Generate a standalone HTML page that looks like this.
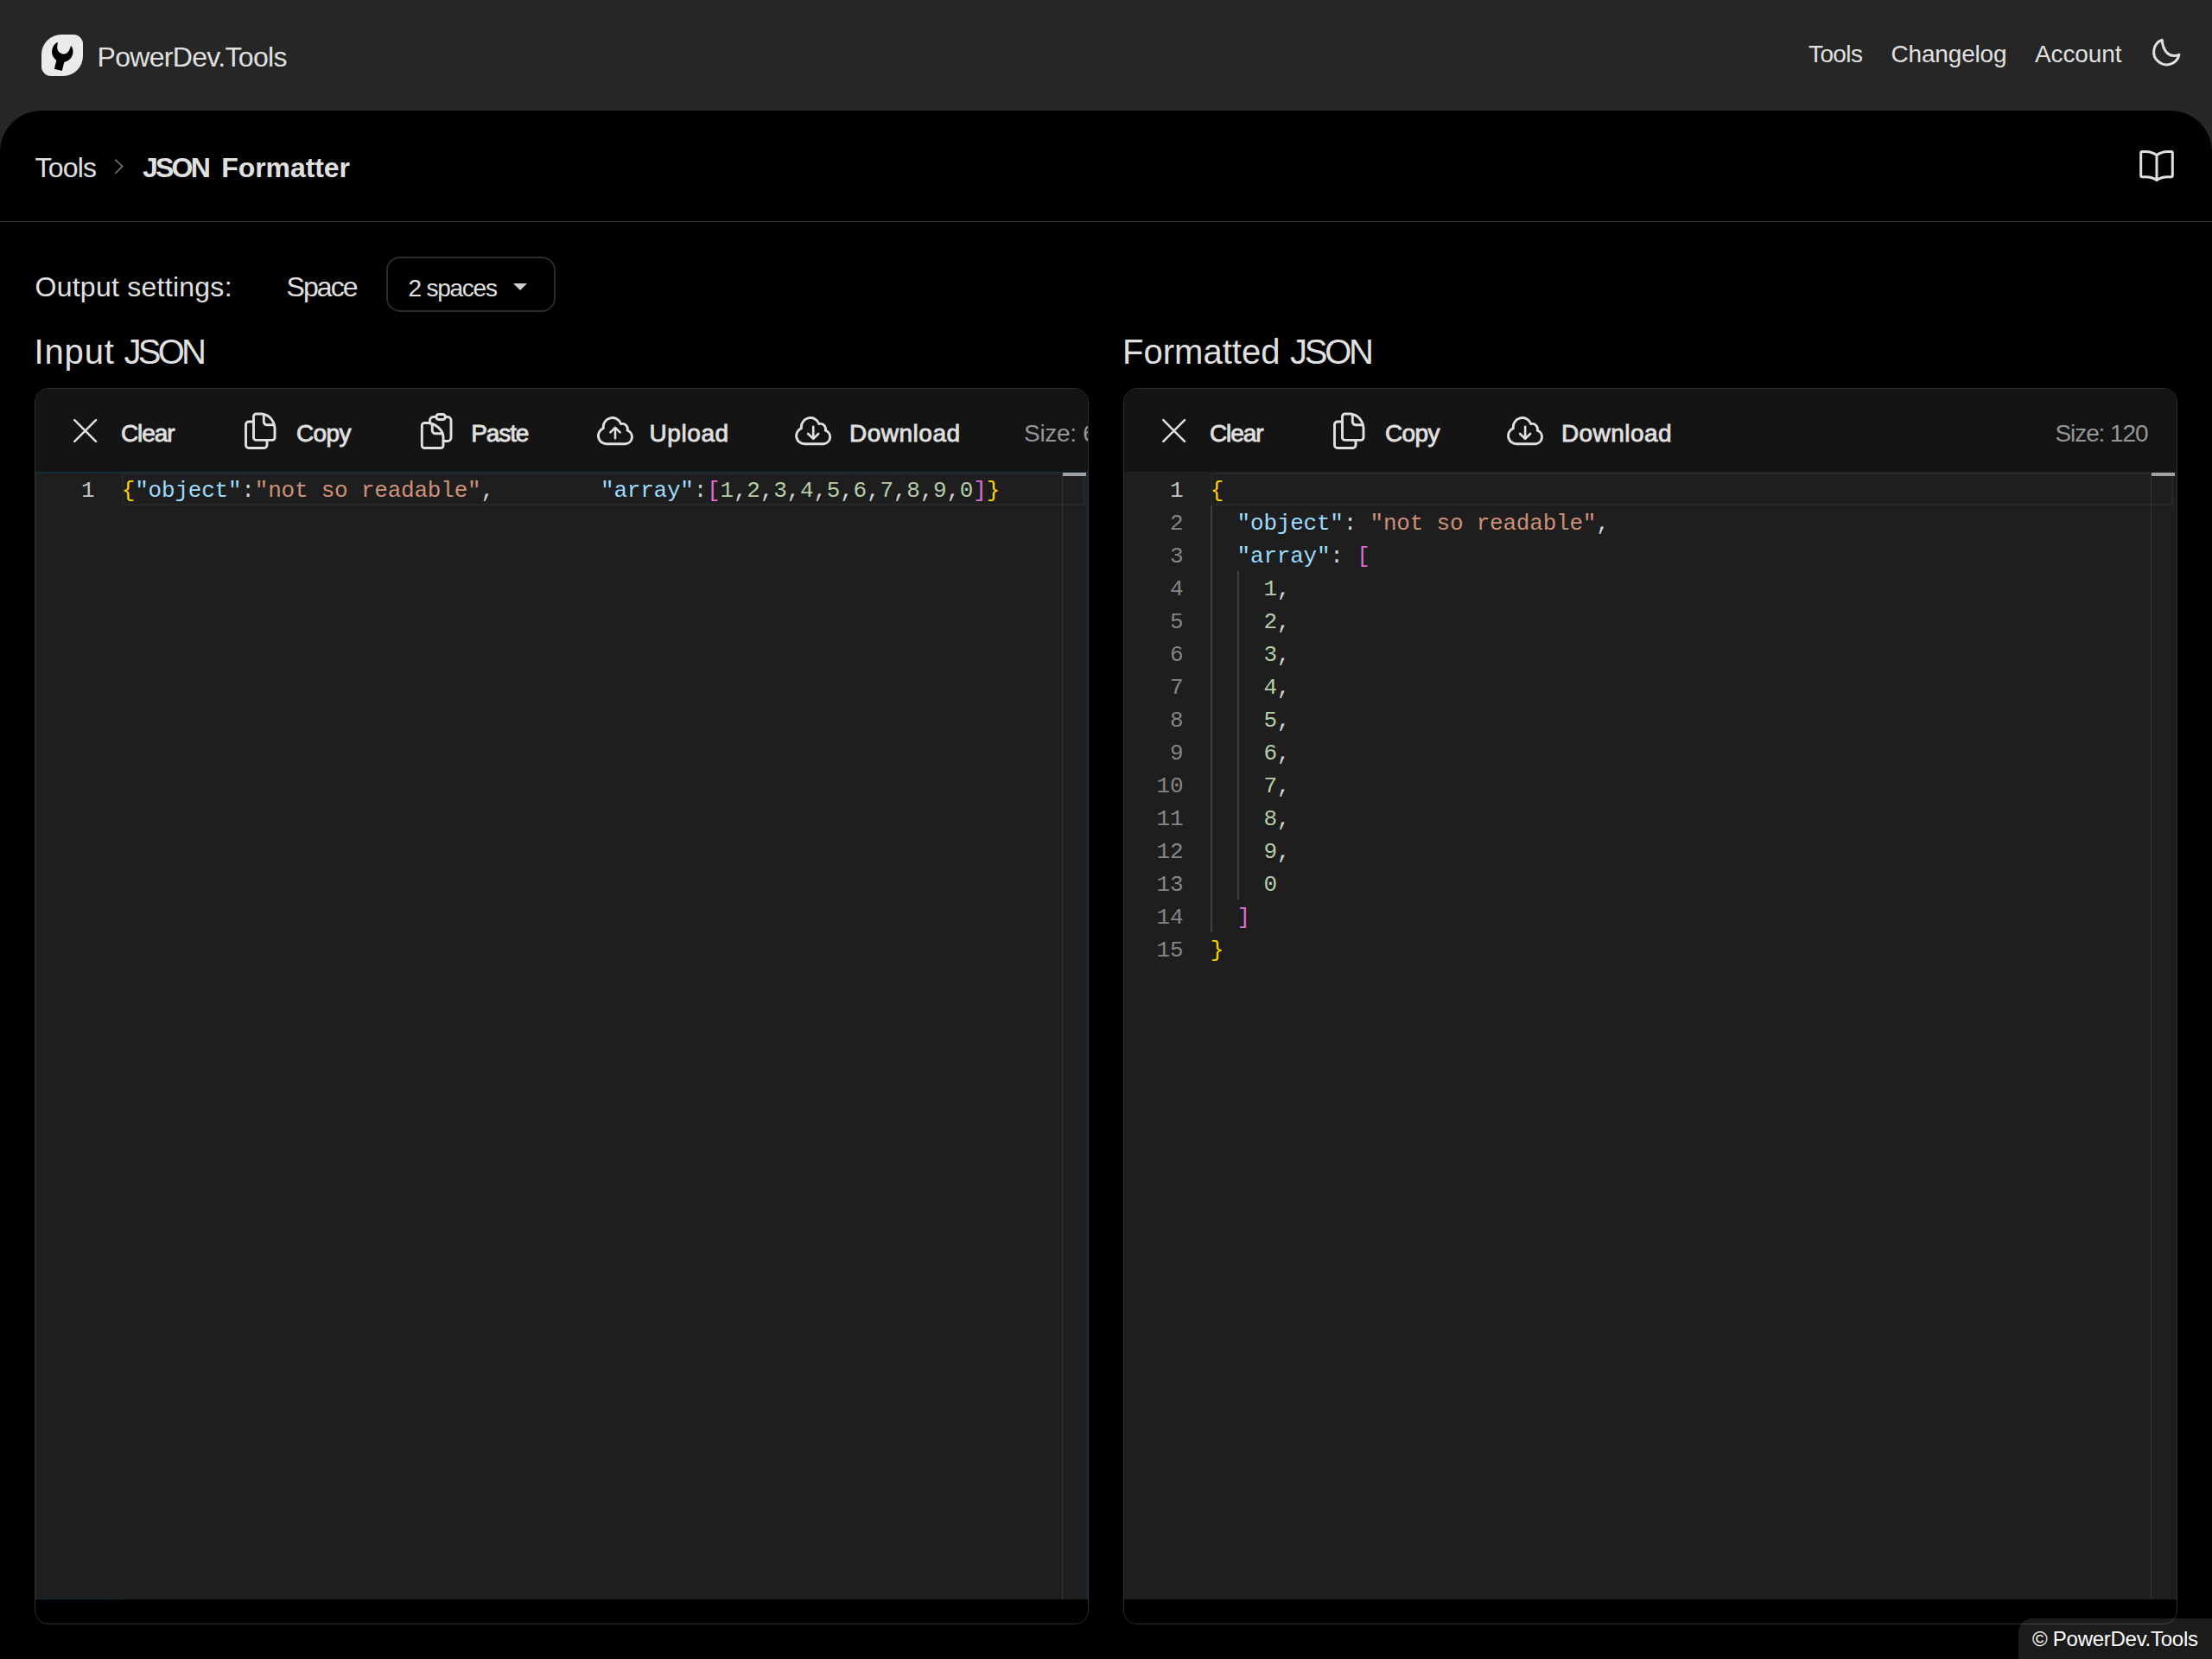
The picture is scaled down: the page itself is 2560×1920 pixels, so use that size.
<!DOCTYPE html>
<html lang="en"><head><meta charset="utf-8"><title>JSON Formatter - PowerDev.Tools</title>
<style>
*{margin:0;padding:0;box-sizing:border-box}
@media (min-resolution:1.5dppx){html{zoom:.5}}
html,body{width:2560px;height:1920px;overflow:hidden;background:#000}
body{position:relative;font-family:"Liberation Sans",sans-serif;color:#e0e0e0}
.t{position:absolute;white-space:pre}
.ic{position:absolute;display:block;overflow:visible}
#hdr{position:absolute;left:0;top:0;width:2560px;height:176px;background:#262626}
#main{position:absolute;left:0;top:128px;width:2560px;height:1792px;background:#000;border-radius:48px 48px 0 0}
#logo{position:absolute;left:48px;top:40px;width:48px;height:48px;background:#ebebeb;border-radius:23px 11px 23px 11px;overflow:hidden}
#logo svg{display:block}
#bcline{position:absolute;left:0;top:256px;width:2560px;height:1px;background:#3d3d3d}
#sel{position:absolute;left:447px;top:297px;width:196px;height:64px;border:2px solid #2b2b2b;border-radius:16px}
#caret{position:absolute;left:594px;top:328px;width:0;height:0;border-left:8px solid transparent;border-right:8px solid transparent;border-top:8px solid #d0d0d0}
.panel{position:absolute;top:449px;width:1220px;height:1431px;border:1px solid #2e2e2e;border-radius:16px;background:#000;overflow:hidden}
.tb{position:absolute;left:0;top:0;width:100%;height:96px;background:#141414}
.ed{position:absolute;left:0;top:96px;width:100%;height:1305px;background:#1e1e1e}
.ed.foc{box-shadow:inset 0 1.5px 0 #10303f,inset 1px 0 0 #1b2c33,inset -1.5px 0 0 #10303f}
.ed.foc::after{content:'';position:absolute;left:0;bottom:0;width:100px;height:1px;background:#16323e}
.clip{position:absolute;overflow:hidden}
.cl,.ln{position:absolute;height:38px;line-height:38px;font-family:"Liberation Mono",monospace;font-size:26px;letter-spacing:-0.21px;white-space:pre;color:#d4d4d4;padding-top:2px}
.ln{width:80px;text-align:right;color:#858585}
.ln.act{color:#c6c6c6}
.k{color:#9cdcfe}.s{color:#ce9178}.n{color:#b5cea8}.b1{color:#ffd700}.b2{color:#da70d6}
.curline{position:absolute;height:38px;border:2px solid #272727}
.guide{position:absolute;width:2px}
.g1{background:#404040}.g2{background:#404040}
.ruler{position:absolute;width:1px;height:1304px;background:#343434}
.rmark{position:absolute;width:27px;height:4px;background:#a3a3a3}
#chip{position:absolute;left:2336px;top:1873px;width:224px;height:47px;background:rgba(255,255,255,.11);border-radius:16px 0 0 0}
</style></head>
<body>
<header id="hdr"></header>
<main id="main"></main>
<div id="logo"><svg width="48" height="48" viewBox="48 40 48 48"><g transform="translate(72.3 59.8) rotate(14)"><path d="M-7.9-9.3A12.2 12.2 0 1 0 7.9-9.3L7.4-4.9A7.4 7.4 0 0 1-7.4-4.9Z"/><rect x="-4.4" y="8" width="9.3" height="13.6"/></g></svg></div>
<div class="t" style="left:112.50px;top:49.91px;font-size:32px;line-height:32px;font-weight:400;color:#e0e0e0;letter-spacing:-0.677px;">PowerDev.Tools</div>
<a class="t" style="left:2093.00px;top:49.30px;font-size:28px;line-height:28px;font-weight:400;color:#e0e0e0;letter-spacing:-0.600px;">Tools</a>
<a class="t" style="left:2188.50px;top:49.30px;font-size:28px;line-height:28px;font-weight:400;color:#e0e0e0;letter-spacing:-0.175px;">Changelog</a>
<a class="t" style="left:2355.00px;top:49.30px;font-size:28px;line-height:28px;font-weight:400;color:#e0e0e0;letter-spacing:-0.117px;">Account</a>
<svg class="ic" style="left:2484px;top:36px" width="48" height="48" viewBox="2484 36 48 48"><path d="M2502.2 46.2A14.8 14.8 0 1 0 2521.9 63.3C2510.5 67.5 2503.2 59.5 2502.2 46.2Z" fill="none" stroke="#e0e0e0" stroke-width="3" stroke-linejoin="round"/></svg>
<a class="t" style="left:40.50px;top:177.91px;font-size:32px;line-height:32px;font-weight:400;color:#e0e0e0;letter-spacing:-0.800px;">Tools</a>
<svg class="ic" style="left:124px;top:176px" width="28" height="34" viewBox="124 176 28 34"><path d="M133.3 184.7L141.6 192.6L133.3 200.7" fill="none" stroke="#858585" stroke-width="1.4"/></svg>
<h1 class="t" style="left:0;top:177.91px;font-size:32px;line-height:32px;font-weight:700;color:#e0e0e0;"><span style="position:absolute;left:165.00px;top:0;letter-spacing:-2.783px">JSON</span> <span style="position:absolute;left:256.25px;top:0;letter-spacing:-0.081px">Formatter</span></h1>
<div id="bcline"></div>
<svg class="ic" style="left:2472px;top:168px" width="48" height="48" viewBox="2472 168 48 48"><path d="M2496 179.6C2492.5 176.8 2488 175.4 2483.5 175.4H2479.2A1.5 1.5 0 0 0 2477.7 176.9V203.3A1.5 1.5 0 0 0 2479.2 204.8H2483.5C2488 204.8 2492.5 206 2496 208.6C2499.5 206 2504 204.8 2508.5 204.8H2512.8A1.5 1.5 0 0 0 2514.3 203.3V176.9A1.5 1.5 0 0 0 2512.8 175.4H2508.5C2504 175.4 2499.5 176.8 2496 179.6ZM2496 179.6V208.6" fill="none" stroke="#e0e0e0" stroke-width="3" stroke-linejoin="round"/></svg>
<label class="t" style="left:40.50px;top:316.41px;font-size:32px;line-height:32px;font-weight:400;color:#e0e0e0;letter-spacing:0.260px;">Output settings:</label>
<label class="t" style="left:331.50px;top:316.41px;font-size:32px;line-height:32px;font-weight:400;color:#e0e0e0;letter-spacing:-1.925px;">Space</label>
<div id="sel"></div>
<div class="t" style="left:472.50px;top:319.80px;font-size:28px;line-height:28px;font-weight:400;color:#e0e0e0;letter-spacing:-1.229px;">2 spaces</div>
<div id="caret"></div>
<h2 class="t" style="left:0;top:387.14px;font-size:40px;line-height:40px;font-weight:400;color:#e0e0e0;"><span style="position:absolute;left:39.50px;top:0;letter-spacing:0.875px">Input</span> <span style="position:absolute;left:143.50px;top:0;letter-spacing:-3.733px">JSON</span></h2>
<h2 class="t" style="left:0;top:387.14px;font-size:40px;line-height:40px;font-weight:400;color:#e0e0e0;"><span style="position:absolute;left:1299.00px;top:0;letter-spacing:0.025px">Formatted</span> <span style="position:absolute;left:1493.00px;top:0;letter-spacing:-3.233px">JSON</span></h2>
<div class="panel" style="left:40px"><div class="tb"></div><div class="ed foc"></div></div>
<div class="panel" style="left:1300px"><div class="tb"></div><div class="ed"></div></div>
<svg class="ic" style="left:74px;top:474px" width="50" height="50" viewBox="74 474 50 50"><path d="M86.3 486.2L111 510.9M111 486.2L86.3 510.9" fill="none" stroke="#e0e0e0" stroke-width="2.5" stroke-linecap="round"/></svg>
<span class="t" style="left:139.90px;top:488.00px;font-size:28px;line-height:28px;font-weight:400;color:#e0e0e0;letter-spacing:-1.050px;-webkit-text-stroke:0.8px #e0e0e0;">Clear</span>
<svg class="ic" style="left:276px;top:472px" width="52" height="54" viewBox="276 472 52 54"><g fill="none" stroke="#e0e0e0" stroke-width="2.9" stroke-linejoin="round" stroke-linecap="round"><path d="M296.5 479H303C311 480 317 486 318 495V506.4A3 3 0 0 1 315 509.4H296.5A3 3 0 0 1 293.5 506.4V482A3 3 0 0 1 296.5 479Z"/><path d="M305.3 480V488A3.7 3.7 0 0 0 309 491.7H317"/><path d="M293.5 488H288A3.5 3.5 0 0 0 284.5 491.5V515A3.5 3.5 0 0 0 288 518.5H305.5A3.5 3.5 0 0 0 309 515V509.4"/></g></svg>
<span class="t" style="left:342.90px;top:488.00px;font-size:28px;line-height:28px;font-weight:400;color:#e0e0e0;letter-spacing:-0.567px;-webkit-text-stroke:0.8px #e0e0e0;">Copy</span>
<svg class="ic" style="left:480px;top:472px" width="52" height="54" viewBox="480 472 52 54"><g fill="none" stroke="#e0e0e0" stroke-width="2.9" stroke-linejoin="round" stroke-linecap="round"><rect x="504.8" y="479.5" width="10.6" height="6" rx="3"/><path d="M504.8 482.5H501.5A4 4 0 0 0 497.5 486.5V489.5M515.4 482.5H518A4 4 0 0 1 522 486.5V506.5A4 4 0 0 1 518 510.5H513"/><path d="M491.5 489.5H496C505 491 512 497 513 505V515.5A3 3 0 0 1 510 518.5H491.3A3 3 0 0 1 488.3 515.5V492.5A3 3 0 0 1 491.5 489.5Z"/><path d="M500.2 491V498A3.8 3.8 0 0 0 504 501.8H512"/></g></svg>
<span class="t" style="left:545.20px;top:488.00px;font-size:28px;line-height:28px;font-weight:400;color:#e0e0e0;letter-spacing:-1.100px;-webkit-text-stroke:0.8px #e0e0e0;">Paste</span>
<svg class="ic" style="left:684px;top:472px" width="56" height="54" viewBox="684 472 56 54"><g fill="none" stroke="#e0e0e0" stroke-width="2.9" stroke-linejoin="round" stroke-linecap="round"><path d="M701.9 513.7A9.4 9.4 0 0 1 698.3 495.6A10.5 10.5 0 0 1 718.6 490.6A6.2 6.2 0 0 1 726.1 498.2A8 8 0 0 1 724.0 513.7Z"/><path stroke-width="2.6" d="M712.0 507.3V495.6M706.4 500.4L712.0 494.9L717.6 500.4"/></g></svg>
<span class="t" style="left:751.40px;top:488.00px;font-size:28px;line-height:28px;font-weight:400;color:#e0e0e0;letter-spacing:0.600px;-webkit-text-stroke:0.8px #e0e0e0;">Upload</span>
<svg class="ic" style="left:913px;top:472px" width="56" height="54" viewBox="913 472 56 54"><g fill="none" stroke="#e0e0e0" stroke-width="2.9" stroke-linejoin="round" stroke-linecap="round"><path d="M931.1 513.7A9.4 9.4 0 0 1 927.5 495.6A10.5 10.5 0 0 1 947.8 490.6A6.2 6.2 0 0 1 955.3 498.2A8 8 0 0 1 953.2 513.7Z"/><path stroke-width="2.6" d="M941.2 493.7V507M935.2 502L941.2 507.8L947.2 502"/></g></svg>
<span class="t" style="left:982.90px;top:488.00px;font-size:28px;line-height:28px;font-weight:400;color:#e0e0e0;letter-spacing:0.529px;-webkit-text-stroke:0.8px #e0e0e0;">Download</span>
<div class="clip" style="left:1100px;top:460px;width:159px;height:80px">
<div class="t" style="left:85.00px;top:28.30px;font-size:28px;line-height:28px;font-weight:400;color:#969696;letter-spacing:-0.300px;">Size: 66</div>
</div>
<svg class="ic" style="left:1334px;top:474px" width="50" height="50" viewBox="74 474 50 50"><path d="M86.3 486.2L111 510.9M111 486.2L86.3 510.9" fill="none" stroke="#e0e0e0" stroke-width="2.5" stroke-linecap="round"/></svg>
<span class="t" style="left:1399.90px;top:488.00px;font-size:28px;line-height:28px;font-weight:400;color:#e0e0e0;letter-spacing:-1.050px;-webkit-text-stroke:0.8px #e0e0e0;">Clear</span>
<svg class="ic" style="left:1536px;top:472px" width="52" height="54" viewBox="276 472 52 54"><g fill="none" stroke="#e0e0e0" stroke-width="2.9" stroke-linejoin="round" stroke-linecap="round"><path d="M296.5 479H303C311 480 317 486 318 495V506.4A3 3 0 0 1 315 509.4H296.5A3 3 0 0 1 293.5 506.4V482A3 3 0 0 1 296.5 479Z"/><path d="M305.3 480V488A3.7 3.7 0 0 0 309 491.7H317"/><path d="M293.5 488H288A3.5 3.5 0 0 0 284.5 491.5V515A3.5 3.5 0 0 0 288 518.5H305.5A3.5 3.5 0 0 0 309 515V509.4"/></g></svg>
<span class="t" style="left:1602.90px;top:488.00px;font-size:28px;line-height:28px;font-weight:400;color:#e0e0e0;letter-spacing:-0.567px;-webkit-text-stroke:0.8px #e0e0e0;">Copy</span>
<svg class="ic" style="left:1737.3px;top:472px" width="56" height="54" viewBox="1737.3 472 56 54"><g fill="none" stroke="#e0e0e0" stroke-width="2.9" stroke-linejoin="round" stroke-linecap="round"><path d="M1755.3 513.7A9.4 9.4 0 0 1 1751.7 495.6A10.5 10.5 0 0 1 1772.0 490.6A6.2 6.2 0 0 1 1779.5 498.2A8 8 0 0 1 1777.4 513.7Z"/><path stroke-width="2.6" d="M1765.4 493.7V507M1759.4 502L1765.4 507.8L1771.4 502"/></g></svg>
<span class="t" style="left:1806.90px;top:488.00px;font-size:28px;line-height:28px;font-weight:400;color:#e0e0e0;letter-spacing:0.457px;-webkit-text-stroke:0.8px #e0e0e0;">Download</span>
<div class="t" style="left:2378.50px;top:488.30px;font-size:28px;line-height:28px;font-weight:400;color:#969696;letter-spacing:-1.088px;">Size: 120</div>
<div class="curline" style="left:141px;top:547px;width:1115px"></div>
<div class="ln act" style="left:29.299999999999997px;top:547px">1</div>
<div class="cl" style="left:140.8px;top:547px"><span class="b1">{</span><span class="k">"object"</span>:<span class="s">"not so readable"</span>,        <span class="k">"array"</span>:<span class="b2">[</span><span class="n">1</span>,<span class="n">2</span>,<span class="n">3</span>,<span class="n">4</span>,<span class="n">5</span>,<span class="n">6</span>,<span class="n">7</span>,<span class="n">8</span>,<span class="n">9</span>,<span class="n">0</span><span class="b2">]</span><span class="b1">}</span></div>
<div class="ruler" style="left:1229px;top:547px"></div><div class="rmark" style="left:1230px;top:547px"></div>
<div class="curline" style="left:1401px;top:547px;width:1114px"></div>
<div class="ln act" style="left:1289.3px;top:547px">1</div>
<div class="cl" style="left:1400.8px;top:547px"><span class="b1">{</span></div>
<div class="ln" style="left:1289.3px;top:585px">2</div>
<div class="cl" style="left:1400.8px;top:585px">  <span class="k">"object"</span>: <span class="s">"not so readable"</span>,</div>
<div class="ln" style="left:1289.3px;top:623px">3</div>
<div class="cl" style="left:1400.8px;top:623px">  <span class="k">"array"</span>: <span class="b2">[</span></div>
<div class="ln" style="left:1289.3px;top:661px">4</div>
<div class="cl" style="left:1400.8px;top:661px">    <span class="n">1</span>,</div>
<div class="ln" style="left:1289.3px;top:699px">5</div>
<div class="cl" style="left:1400.8px;top:699px">    <span class="n">2</span>,</div>
<div class="ln" style="left:1289.3px;top:737px">6</div>
<div class="cl" style="left:1400.8px;top:737px">    <span class="n">3</span>,</div>
<div class="ln" style="left:1289.3px;top:775px">7</div>
<div class="cl" style="left:1400.8px;top:775px">    <span class="n">4</span>,</div>
<div class="ln" style="left:1289.3px;top:813px">8</div>
<div class="cl" style="left:1400.8px;top:813px">    <span class="n">5</span>,</div>
<div class="ln" style="left:1289.3px;top:851px">9</div>
<div class="cl" style="left:1400.8px;top:851px">    <span class="n">6</span>,</div>
<div class="ln" style="left:1289.3px;top:889px">10</div>
<div class="cl" style="left:1400.8px;top:889px">    <span class="n">7</span>,</div>
<div class="ln" style="left:1289.3px;top:927px">11</div>
<div class="cl" style="left:1400.8px;top:927px">    <span class="n">8</span>,</div>
<div class="ln" style="left:1289.3px;top:965px">12</div>
<div class="cl" style="left:1400.8px;top:965px">    <span class="n">9</span>,</div>
<div class="ln" style="left:1289.3px;top:1003px">13</div>
<div class="cl" style="left:1400.8px;top:1003px">    <span class="n">0</span></div>
<div class="ln" style="left:1289.3px;top:1041px">14</div>
<div class="cl" style="left:1400.8px;top:1041px">  <span class="b2">]</span></div>
<div class="ln" style="left:1289.3px;top:1079px">15</div>
<div class="cl" style="left:1400.8px;top:1079px"><span class="b1">}</span></div>
<div class="guide g1" style="left:1401px;top:585px;height:494px"></div>
<div class="guide g2" style="left:1432px;top:661px;height:380px"></div>
<div class="ruler" style="left:2489px;top:547px"></div><div class="rmark" style="left:2490px;top:547px"></div>
<footer id="chip"></footer>
<div class="t" style="left:2352.00px;top:1884.68px;font-size:24px;line-height:24px;font-weight:400;color:#ffffff;letter-spacing:-0.267px;">© PowerDev.Tools</div>
</body></html>
